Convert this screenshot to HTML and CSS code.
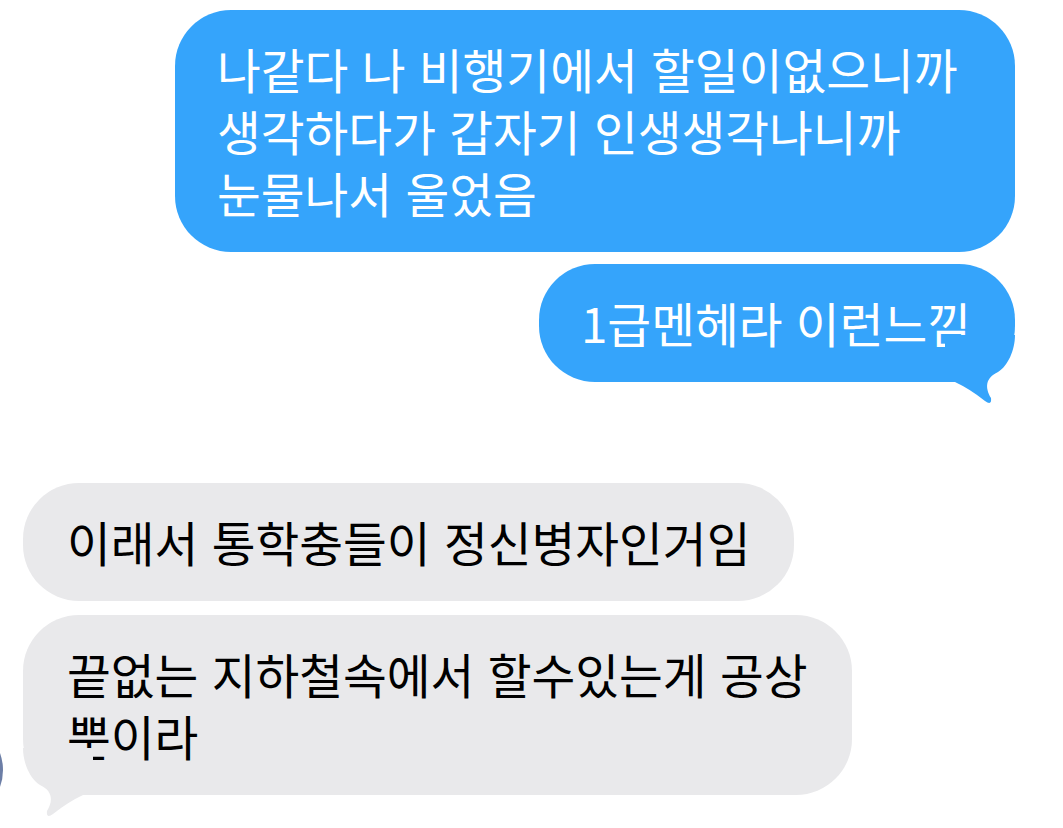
FILE: index.html
```html
<!DOCTYPE html>
<html lang="ko">
<head>
  <meta charset="UTF-8">
  <meta name="viewport" content="width=device-width, initial-scale=1.0">
  <title>메시지</title>
  <link rel="stylesheet" href="styles.css">
</head>
<body>
  <div class="chat">
    <div class="group sent">
      <div class="bubble">나같다 나 비행기에서 할일이없으니까 생각하다가 갑자기 인생생각나니까 눈물나서 울었음</div>
      <div class="bubble last">1급멘헤라 이런느낌
        <svg class="tail" width="70" height="72" viewBox="0 0 70 72">
          <path d="M0 47 L10 47 Q25 54 40 66 Q47 71 46 63 C40 53 40 43 53 37 C63 31 70 15 70 0 L0 0 Z"/>
        </svg>
      </div>
    </div>

    <div class="group received">
      <div class="avatar"></div>
      <div class="bubble">이래서 통학충들이 정신병자인거임</div>
      <div class="bubble last">끝없는 지하철속에서 할수있는게 공상 뿐이라
        <svg class="tail" width="70" height="72" viewBox="0 0 70 72">
          <path d="M0 47 L10 47 Q25 54 40 66 Q47 71 46 63 C40 53 40 43 53 37 C63 31 70 15 70 0 L0 0 Z"/>
        </svg>
      </div>
    </div>
  </div>
</body>
</html>
```

FILE: styles.css
```css
body {
  margin: 0;
  padding: 0;
  background: white;
  font-family: "Noto Sans CJK KR", "Noto Sans", sans-serif;
  overflow: hidden;
}

.chat {
  padding: 10px 48px 30px 23px;
}

.group {
  display: flex;
  flex-direction: column;
  position: relative;
}

.sent {
  align-items: flex-end;
  gap: 12px;
}

.received {
  align-items: flex-start;
  gap: 14px;
  margin-top: 101px;
}

.bubble {
  position: relative;
  max-width: 840px;
  box-sizing: border-box;
  padding: 28px 44px 28px 42px;
  font-size: 47.6px;
  line-height: 62px;
  word-break: keep-all;
  border-radius: 56px;
}

.sent .bubble {
  background: #35a4fb;
  color: white;
}

.received .bubble {
  max-width: 829px;
  background: #e9e9eb;
  color: black;
  padding-left: 44px;
}

.tail {
  position: absolute;
  bottom: -25px;
}

.sent .tail {
  right: 0;
  fill: #35a4fb;
}

.received .tail {
  left: 0;
  fill: #e9e9eb;
  transform: scaleX(-1);
}

/* sender picture, mostly cut off by the window edge */
.avatar {
  position: absolute;
  left: -120px;
  bottom: -25px;
  width: 100px;
  height: 100px;
  border-radius: 50%;
  background: #6c7ea6;
}
```
